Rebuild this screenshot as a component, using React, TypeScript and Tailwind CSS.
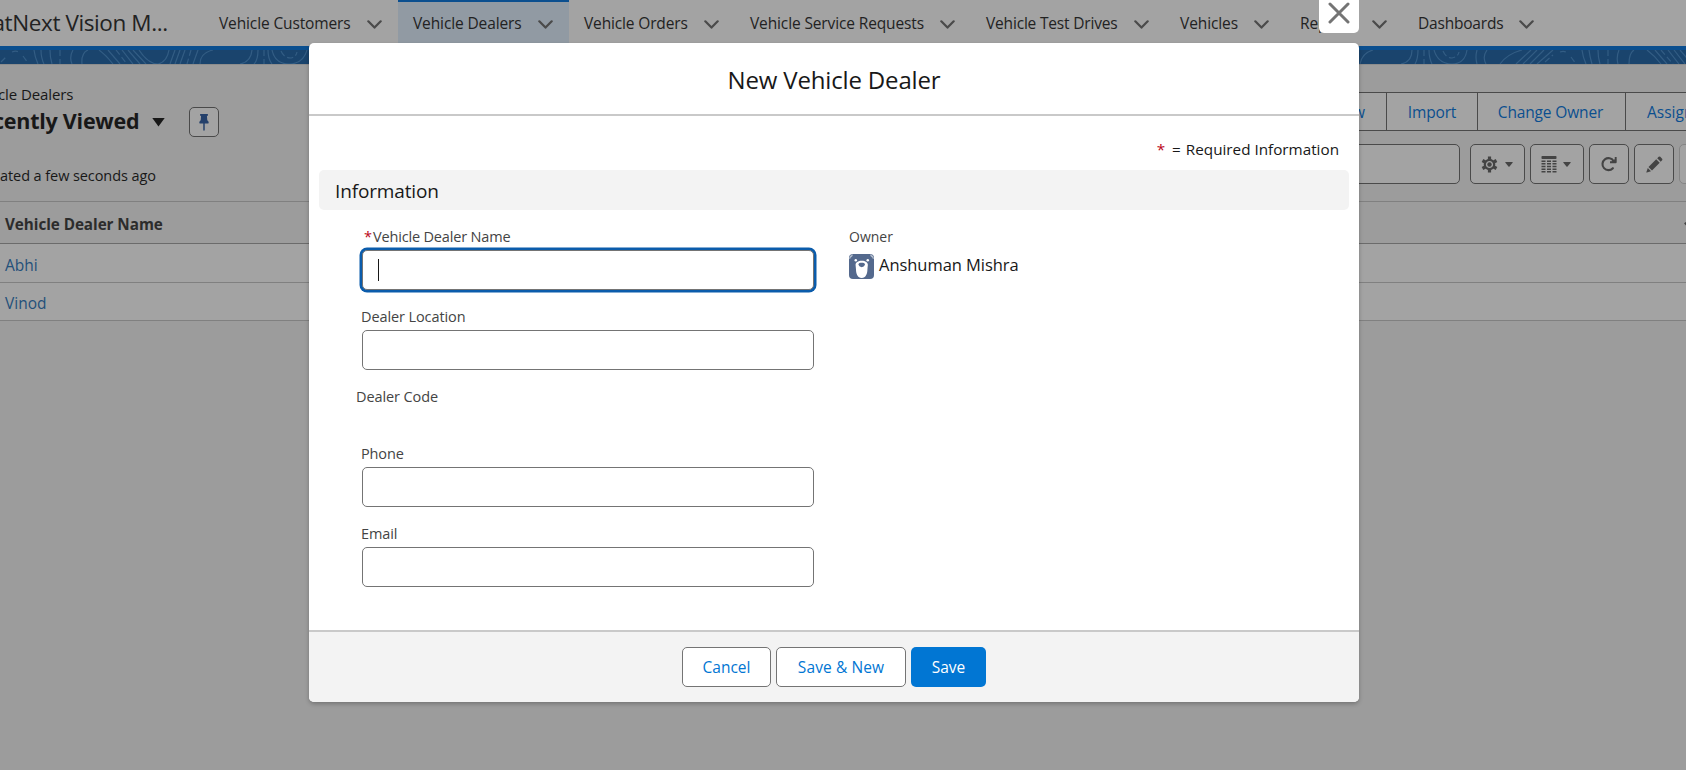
import React from "react";

type NavItem = { label: string; width: string; tracking: string; active?: boolean };

const navItems: NavItem[] = [
  { label: "Vehicle Customers", width: "w-[194px]", tracking: "tracking-[-0.13px]" },
  { label: "Vehicle Dealers", width: "w-[171px]", tracking: "tracking-[-0.12px]", active: true },
  { label: "Vehicle Orders", width: "w-[166px]", tracking: "tracking-[-0.15px]" },
  { label: "Vehicle Service Requests", width: "w-[236px]", tracking: "tracking-[-0.13px]" },
  { label: "Vehicle Test Drives", width: "w-[194px]", tracking: "tracking-[-0.18px]" },
  { label: "Vehicles", width: "w-[120px]", tracking: "tracking-[-0.1px]" },
  { label: "Reports", width: "w-[118px]", tracking: "tracking-[-0.1px]" },
  { label: "Dashboards", width: "w-[147px]", tracking: "tracking-[-0.2px]" },
];

const contourLines = [
  "M34 0Q35 8 38 14", "M41 0Q41 8 44 14", "M50 0Q50 8 52 14", "M73 0Q69 7 72 14",
  "M88 0Q81 3 82 14", "M99 0Q106 5 113 14", "M108 0L120 14", "M122 0L133 14", "M128 0L140 14",
  "M133 0L146 14", "M139 0Q148 14 158 14Q167 12 169 0", "M175 0L170 14", "M180 0L175 14",
  "M185 0L180 14", "M198 0L193 14", "M213 0Q200 3 200 14", "M252 0Q251 12 240 14",
  "M258 0Q258 10 254 14", "M272 0Q275 14 289 14Q303 14 307 0", "M268 0Q268 9 272 14",
  "M1373 0Q1362 3 1360 14", "M1412 0Q1412 12 1401 14", "M1418 0Q1418 9 1415 14", "M1429 0Q1429 8 1432 14",
  "M1434 0Q1438 14 1452 14Q1465 14 1467 0", "M1477 0Q1475 7 1477 14", "M1487 0Q1482 7 1486 14",
  "M1522 0Q1507 4 1500 14", "M1531 0L1516 14", "M1537 0L1523 14", "M1544 0L1530 14", "M1553 0L1537 14",
  "M1582 0Q1583 8 1586 14", "M1589 0Q1590 8 1592 14", "M1598 0Q1598 8 1600 14", "M1619 0Q1616 7 1618 14",
  "M1634 0Q1629 3 1629 14", "M1647 0Q1655 6 1661 14", "M1655 0L1667 14", "M1668 0L1679 14",
  "M1674 0L1685 14", "M1680 0L1692 14",
];

const contourDashes = [
  "M1 12L6 7", "M12 2Q17 0 20 3", "M23 6L28 13", "M60 0V14", "M116 0L127 14", "M191 0L187 14", "M264 0V14",
  "M281 1Q284 8 291 8Q296 7 297 2", "M1424 0V14", "M1443 1Q1446 8 1452 8Q1458 7 1459 2",
  "M1545 12L1553 5", "M1560 2Q1565 0 1568 4", "M1571 7L1576 14", "M1608 0V14", "M1661 0L1673 14",
];

function Contours() {
  return (
    <svg className="block h-[14px] w-[1686px]" viewBox="0 0 1686 14" fill="none" stroke="#335d84" strokeWidth="1.2">
      {contourLines.map((d) => <path key={d} d={d} />)}
      {contourDashes.map((d) => <path key={d} d={d} strokeDasharray="6 3" />)}
    </svg>
  );
}

function ChevronDown() {
  return (
    <svg className="h-[9px] w-[15px]" viewBox="0 0 15 9" fill="none" stroke="#4a4a4a" strokeWidth="2.2" strokeLinecap="round" strokeLinejoin="round">
      <path d="M1.3 1.3 7.5 7.6l6.2-6.3" />
    </svg>
  );
}

function Caret() {
  return (
    <svg className="h-[5px] w-[8px]" viewBox="0 0 8 5" fill="#444444">
      <path d="M.8 0h6.4q.9 0 .4.8L4.5 4.6q-.5.6-1 0L.4.8Q-.1 0 .8 0Z" />
    </svg>
  );
}

function Gear() {
  return (
    <svg className="size-[17px]" viewBox="-8.5 -8.5 17 17" fill="none" stroke="#444444">
      <circle r="4.7" strokeWidth="2.2" />
      <circle r="2.2" fill="#444444" stroke="none" />
      <path strokeWidth="3.2" d="M0-5V-8M0 5V8M4.4-2.5 7-4M4.4 2.5 7 4M-4.4-2.5-7-4M-4.4 2.5-7 4" />
    </svg>
  );
}

function TableIcon() {
  return (
    <svg className="h-[17px] w-[16px]" viewBox="0 0 16 17" fill="#444444">
      <rect x=".5" y="0" width="15" height="3" rx=".8" />
      {[4.4, 7.1, 9.8, 12.5, 15.1].map((y) => (
        <path key={y} d={`M.5 ${y}h4v1.5h-4zM6 ${y}h4v1.5h-4zM11.5 ${y}h4v1.5h-4z`} />
      ))}
    </svg>
  );
}

function Refresh() {
  return (
    <svg className="size-[16px]" viewBox="0 0 16 16" fill="none" stroke="#444444" strokeWidth="2.1">
      <path d="M11.9 12.2A6 6 0 1 1 12.6 5" strokeLinecap="round" />
      <path d="M14.7 1v5.2H9" strokeWidth="1.9" strokeLinejoin="round" />
      <path d="M10.5 6.2 14.7 3v3.2z" fill="#444444" strokeWidth=".8" />
    </svg>
  );
}

function Pencil() {
  return (
    <svg className="size-[17px]" viewBox="0 0 17 17" fill="#444444">
      <path d="M10.2 3.3 13.7 6.8 6 14.5 2.5 11zM11.2 2.3l1.5-1.5q.8-.7 1.6 0L16.1 2.7q.7.8 0 1.6l-1.4 1.5zM1.8 12 5 15.2.9 16.5q-.8.2-.5-.6z" />
    </svg>
  );
}

function Pin() {
  return (
    <svg className="h-[17px] w-[10px]" viewBox="0 0 11 17" fill="#24406b" preserveAspectRatio="none">
      <path d="M1.7 0h7.6q.6 0 .6.7v.5q0 .6-.6.6H8.7l.4 4.5q1.5.8 1.6 2.5 0 .7-.7.7H6.3v6.3q0 .9-.8.9t-.8-.9V9.5H1q-.7 0-.7-.7.1-1.7 1.6-2.5l.4-4.5h-.6q-.6 0-.6-.6V.7Q1.1 0 1.7 0Z" />
    </svg>
  );
}

function Avatar() {
  return (
    <svg className="h-[25px] w-[25px] rounded" viewBox="0 0 24 25" preserveAspectRatio="none">
      <rect width="24" height="25" fill="#54698d" />
      <path d="M0 4.5Q.5 1 4 .5L3 2.5Q1.5 3 1 5zM24 4.5Q23.5 1 20 .5l1 2q1.5.5 2 2.5z" fill="#b4becd" />
      <circle cx="6.5" cy="6.3" r="1.2" fill="#fff" />
      <circle cx="18" cy="6.3" r="1.2" fill="#fff" />
      <path d="M12.2 6.8c3.5 0 5.9 1.7 5.9 4.3 0 1.5-.4 2.6-.4 4.2 0 4.6-1.6 8.7-5.5 8.7s-5.5-4.1-5.5-8.7c0-1.6-.4-2.7-.4-4.2 0-2.6 2.4-4.3 5.9-4.3Z" fill="#fff" />
      <path d="M9.2 10.3c0-1.2 1.4-1.6 3-1.6s3 .4 3 1.6-1.2 2.9-3 2.9-3-1.7-3-2.9Z" fill="#54698d" />
    </svg>
  );
}

function AppNav() {
  return (
    <nav className="flex h-[46px] shrink-0 bg-[#a3a3a3] text-[15.5px] text-[#222222]">
      <div className="flex w-[204px] shrink-0 items-center overflow-hidden">
        <span className="-ml-[7.5px] text-[22.5px] tracking-[-0.4px] whitespace-nowrap text-[#222222]">atNext Vision M...</span>
      </div>
      {navItems.map((item) => (
        <div
          key={item.label}
          className={`flex shrink-0 items-center justify-between pr-[16px] pl-[15px] ${item.width} ${
            item.active ? "border-t-2 border-[#0b4f8f] bg-[#919aa3]" : "pt-[2px]"
          }`}
        >
          <span className={`whitespace-nowrap ${item.tracking}`}>{item.label}</span>
          <span className="mt-[1px]"><ChevronDown /></span>
        </div>
      ))}
    </nav>
  );
}

const iconButton = "flex h-10 shrink-0 items-center justify-center rounded-[5px] border border-[#4a4a4a] bg-[#a3a3a3]";

function ListHeader() {
  return (
    <header className="flex h-[137px] shrink-0 justify-between border-t border-[#8d8d8d] bg-[#9c9c9c]">
      <div className="w-[300px] overflow-hidden text-[#181818]">
        <div className="mt-[19px] flex h-[20px] items-center">
          <span className="-ml-[2px] text-[15px] tracking-[-0.1px] whitespace-nowrap">cle Dealers</span>
        </div>
        <div className="mt-[2px] flex h-[32px] items-center">
          <span className="mb-[2px] -ml-[7px] w-[145px] text-[21.5px] font-bold tracking-[-0.25px] whitespace-nowrap">cently Viewed</span>
          <svg className="ml-[14px] h-[9px] w-[13px]" viewBox="0 0 13 9" fill="#181818"><path d="M.3 0h12.4L6.5 8.5z" /></svg>
          <span className="ml-[24px] flex size-[30px] items-center justify-center rounded-[5px] border border-[#4a4a4a] bg-[#a3a3a3]"><Pin /></span>
        </div>
        <div className="mt-[28px] flex h-[20px] items-center text-[14.5px] tracking-[-0.08px] whitespace-nowrap">
          ated a few seconds ago
        </div>
      </div>
      <div className="flex w-[386px] flex-col overflow-hidden pt-[27px]">
        <div className="flex h-[39px] w-[500px] shrink-0 border-y border-[#4a4a4a] bg-[#a3a3a3] text-[15.5px] text-[#0b4f8f]">
          <div className="flex w-[87px] items-center justify-end border-r border-[#4a4a4a] pt-[2px] pr-[21px]">New</div>
          <div className="flex w-[91px] items-center justify-center border-r border-[#4a4a4a] pt-[2px] tracking-[-0.15px]">Import</div>
          <div className="flex w-[148px] items-center justify-center border-r border-[#4a4a4a] pt-[2px] pr-[2px] tracking-[-0.15px]">Change Owner</div>
          <div className="flex items-center pt-[2px] pl-[21px] whitespace-nowrap">Assign Label</div>
        </div>
        <div className="mt-[13px] flex w-[500px]">
          <div className={`${iconButton} w-[160px]`} />
          <div className={`${iconButton} ml-[10px] w-[55px] gap-[7px] pr-[2px]`}><Gear /><Caret /></div>
          <div className={`${iconButton} ml-[5px] w-[54px] gap-[6px] pr-[2px]`}><TableIcon /><Caret /></div>
          <div className={`${iconButton} ml-[5px] w-[40px]`}><Refresh /></div>
          <div className={`${iconButton} ml-[5px] w-[40px]`}><Pencil /></div>
          <div className="ml-[5px] h-10 w-[40px] shrink-0 rounded-[5px] border border-[#858585] bg-[#a3a3a3]" />
        </div>
      </div>
    </header>
  );
}

function DealerTable() {
  return (
    <div className="flex flex-col border-t border-[#808080] text-[15.5px]">
      <div className="flex h-[42px] items-center justify-between overflow-hidden border-b border-[#6b6b6b] bg-[#9c9c9c] pt-[3px] pl-[5px] text-[15.25px] font-bold tracking-[-0.05px] text-[#2c2c2c]">
        <span>Vehicle Dealer Name</span>
        <svg className="-mr-[6px] h-[5px] w-[8px]" viewBox="0 0 8 5" fill="none" stroke="#444444" strokeWidth="2"><path d="M.8.8 4 4 7.2.8" /></svg>
      </div>
      <div className="flex h-[39px] items-center border-b border-[#808080] bg-[#a3a3a3] pt-[5px] pl-[5px] text-[#24507a]">Abhi</div>
      <div className="flex h-[38px] items-center border-b border-[#808080] bg-[#a3a3a3] pt-[4px] pl-[5px] text-[#24507a]">Vinod</div>
    </div>
  );
}

function Field({ label, tracking, focused, required }: { label: string; tracking: string; focused?: boolean; required?: boolean }) {
  return (
    <div className="ml-[5px] flex h-[80px] flex-col">
      <label className={`-ml-px flex h-[27px] items-center pt-[1px] text-[14.5px] whitespace-nowrap text-[#444444] ${tracking}`}>
        {required && <span className="mr-[3px] ml-[3px] w-[6px] text-[#ba0517]">*</span>}
        {label}
      </label>
      <div
        className={`flex h-10 w-[452px] items-center rounded-[5px] border border-[#747474] bg-white pl-[15px] ${
          focused ? "shadow-[0_0_0_2.5px_#0b5cab]" : ""
        }`}
      >
        {focused && <span className="h-[22px] w-px bg-[#181818]" />}
      </div>
    </div>
  );
}

function NewDealerDialog() {
  return (
    <section
      role="dialog"
      className="absolute top-[43px] left-[309px] flex h-[659px] w-[1050px] flex-col rounded-[5px] bg-white shadow-[0_2px_4px_rgba(0,0,0,0.25)]"
    >
      <button className="absolute -top-[43px] right-0 flex h-[33px] w-[40px] justify-center rounded-b-[5px] bg-white">
        <svg className="mt-[2px] h-[22px] w-[22px]" viewBox="0 0 22 22" stroke="#747474" strokeWidth="3" strokeLinecap="round">
          <path d="M2 2 20 20M20 2 2 20" />
        </svg>
      </button>
      <h2 className="flex h-[73px] shrink-0 items-center justify-center border-b-2 border-[#c9c9c9] text-[24px] tracking-[-0.16px] text-[#181818]">
        <span className="mt-[2px]">New Vehicle Dealer</span>
      </h2>
      <div className="flex grow flex-col px-[10px]">
        <div className="flex h-[54px] items-center justify-end pt-[13px] pr-[10px] text-[15.25px] text-[#181818]">
          <span className="mr-[7px] text-[#ba0517]">*</span>
          <span className="mr-[5px]">=</span>
          <span>Required Information</span>
        </div>
        <h3 className="flex h-[40px] shrink-0 items-center rounded-[5px] bg-[#f3f3f3] pt-[2px] pl-[16px] text-[19px] tracking-[-0.15px] text-[#181818]">
          Information
        </h3>
        <div className="flex pt-[13px] pl-[38px]">
          <div className="flex w-[492px] flex-col">
            <Field label="Vehicle Dealer Name" tracking="tracking-[-0.17px]" focused required />
            <Field label="Dealer Location" tracking="tracking-[-0.1px]" />
            <div className="-ml-px flex h-[57px] items-start pt-[3px] text-[14.5px] tracking-[-0.1px] text-[#444444]">Dealer Code</div>
            <Field label="Phone" tracking="tracking-[-0.15px]" />
            <Field label="Email" tracking="tracking-[-0.1px]" />
          </div>
          <div className="flex flex-col">
            <div className="flex h-[27px] items-center text-[14px] text-[#444444]">Owner</div>
            <div className="mt-[4px] flex h-[25px] items-center gap-[5px]">
              <Avatar />
              <span className="mb-[3px] text-[16.5px] tracking-[-0.05px] text-[#181818]">Anshuman Mishra</span>
            </div>
          </div>
        </div>
      </div>
      <footer className="flex h-[72px] shrink-0 items-start justify-center gap-[5px] rounded-b-[5px] border-t-2 border-[#c9c9c9] bg-[#f3f3f3] pt-[15px] text-[15.5px] text-[#0176d3]">
        <button className="h-10 w-[89px] rounded-[5px] border border-[#747474] bg-white pt-[2px]">Cancel</button>
        <button className="h-10 w-[130px] rounded-[5px] border border-[#747474] bg-white pt-[2px] tracking-[0.1px]">Save &amp; New</button>
        <button className="h-10 w-[75px] rounded-[5px] bg-[#0176d3] pt-[2px] text-white">Save</button>
      </footer>
    </section>
  );
}

export default function App() {
  return (
    <div className="relative flex h-[770px] w-full flex-col overflow-hidden bg-[#9c9c9c] font-['Open_Sans','Noto_Sans',sans-serif]">
      <AppNav />
      <div className="h-[4px] shrink-0 bg-[#0b4f8f]" />
      <div className="h-[14px] shrink-0 overflow-hidden bg-[#1a446d]"><Contours /></div>
      <ListHeader />
      <DealerTable />
      <NewDealerDialog />
    </div>
  );
}
